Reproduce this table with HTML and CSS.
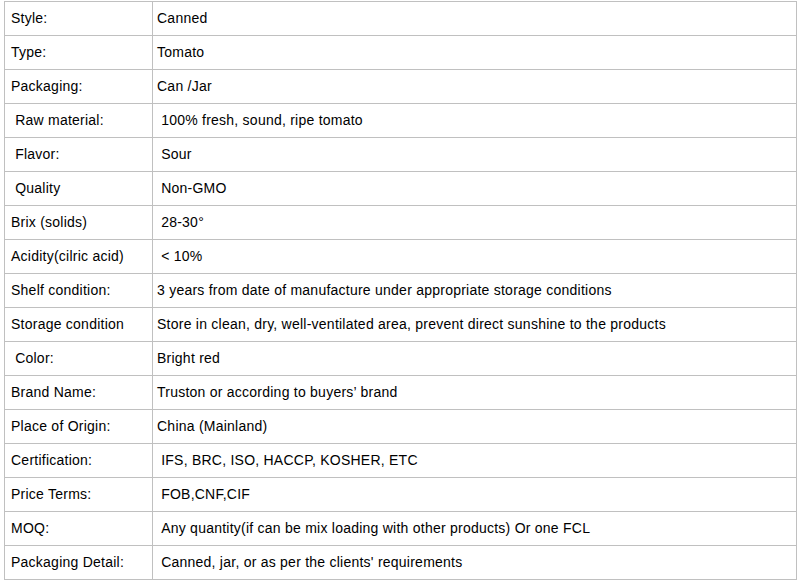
FILE: index.html
```html
<!DOCTYPE html>
<html>
<head>
<meta charset="utf-8">
<link rel="stylesheet" href="styles.css">
</head>
<body>
<table class="spec">
<colgroup><col class="c1"><col class="c2"></colgroup>
<tr><td class="k">Style:</td><td class="v">Canned</td></tr>
<tr><td class="k">Type:</td><td class="v">Tomato</td></tr>
<tr><td class="k">Packaging:</td><td class="v">Can /Jar</td></tr>
<tr><td class="k">&nbsp;Raw material:</td><td class="v">&nbsp;100% fresh, sound, ripe tomato</td></tr>
<tr><td class="k">&nbsp;Flavor:</td><td class="v">&nbsp;Sour</td></tr>
<tr><td class="k">&nbsp;Quality</td><td class="v">&nbsp;Non-GMO</td></tr>
<tr><td class="k">Brix (solids)</td><td class="v">&nbsp;28-30°</td></tr>
<tr><td class="k">Acidity(cilric acid)</td><td class="v">&nbsp;&lt; 10%</td></tr>
<tr><td class="k">Shelf condition:</td><td class="v">3 years from date of manufacture under appropriate storage conditions</td></tr>
<tr><td class="k">Storage condition</td><td class="v">Store in clean, dry, well-ventilated area, prevent direct sunshine to the products</td></tr>
<tr><td class="k">&nbsp;Color:</td><td class="v">Bright red</td></tr>
<tr><td class="k">Brand Name:</td><td class="v">Truston or according to buyers’ brand</td></tr>
<tr><td class="k">Place of Origin:</td><td class="v">China (Mainland)</td></tr>
<tr><td class="k">Certification:</td><td class="v">&nbsp;IFS, BRC, ISO, HACCP, KOSHER, ETC</td></tr>
<tr><td class="k">Price Terms:</td><td class="v">&nbsp;FOB,CNF,CIF</td></tr>
<tr><td class="k">MOQ:</td><td class="v">&nbsp;Any quantity(if can be mix loading with other products) Or one FCL</td></tr>
<tr><td class="k">Packaging Detail:</td><td class="v">&nbsp;Canned, jar, or as per the clients' requirements</td></tr>
</table>
</body>
</html>
```
FILE: styles.css
```css
html, body {
  margin: 0;
  padding: 0;
  background: #fff;
}
.spec {
  margin: 1px 0 0 4px;
  border-collapse: collapse;
  table-layout: fixed;
  width: 793px;
  font-family: "Liberation Sans", Arial, sans-serif;
  font-size: 14px;
  letter-spacing: 0.24px;
  color: #000;
}
.c1 { width: 148px; }
.spec td {
  border: 1px solid #c0c0c0;
  height: 32px;
  padding: 0 0 1px 0;
  vertical-align: middle;
  white-space: nowrap;
}
.spec td.k { padding-left: 6px; }
.spec td.v { padding-left: 4px; }
```
